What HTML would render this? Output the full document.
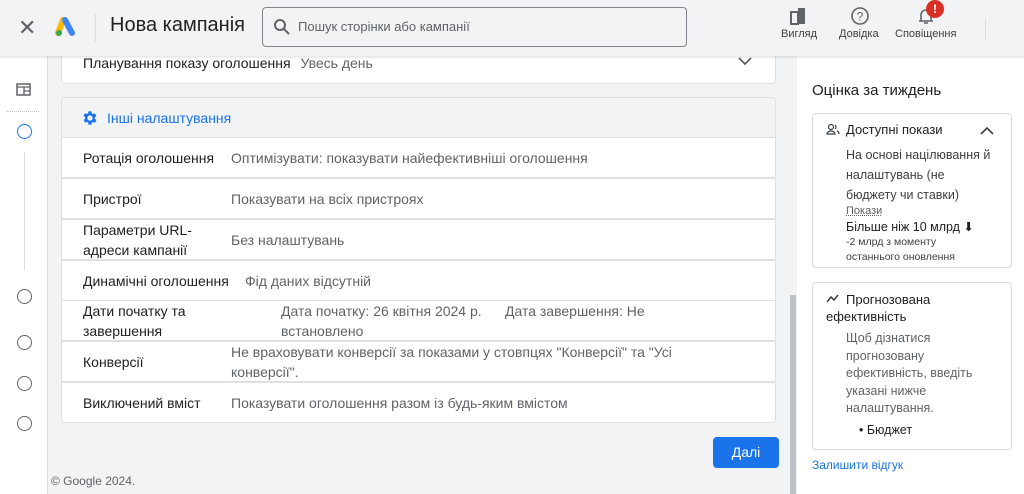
<!DOCTYPE html><html><head><meta charset="utf-8"><style>
*{box-sizing:border-box;margin:0;padding:0}
body{width:1024px;height:494px;overflow:hidden;background:#f1f3f4;font-family:"Liberation Sans","DejaVu Sans",sans-serif;color:#202124;position:relative}
.hdr{position:absolute;left:0;top:0;width:1024px;height:56px;background:#f1f3f4;box-shadow:0 1px 3px rgba(0,0,0,.15);z-index:2}
.abs{position:absolute}
.rail{left:0;top:56px;width:48px;height:438px;background:#fff;border-right:1px solid #e0e0e0}
.circ{position:absolute;left:17px;width:15px;height:15px;border:1.8px solid #5f6368;border-radius:50%}
.card{position:absolute;left:61px;width:715px;background:#fff;border:1px solid #e0e0e0}
.row{position:absolute;left:61px;width:715px;height:41px;background:#fff;border:1px solid #e0e0e0;font-size:14px}
.row .l{position:absolute;left:21px;color:#202124;line-height:20px}
.row .v{position:absolute;color:#5f6368;line-height:20px}
.right{left:797px;top:56px;width:227px;height:438px;background:#fff}
.rc{position:absolute;left:812px;width:200px;border:1px solid #dadce0;border-radius:4px;background:#fff;font-size:12.5px;color:#3c4043}
</style></head><body>
<div class="hdr">
 <div class="abs" style="left:18px;top:15px;font-size:22px;color:#5f6368">✕</div>
 <svg class="abs" style="left:55px;top:17px" width="22" height="20" viewBox="0 0 22 20"><path d="M8 3 L3 16" stroke="#fbbc04" stroke-width="6" stroke-linecap="round"/><path d="M10 3 L17 16" stroke="#4285f4" stroke-width="6" stroke-linecap="round"/><circle cx="4" cy="16" r="3" fill="#34a853"/></svg>
 <div class="abs" style="left:95px;top:14px;width:1px;height:28px;background:#dadce0"></div>
 <div class="abs" style="left:110px;top:14px;font-size:20px;color:#202124">Нова кампанія</div>
 <div class="abs" style="left:262px;top:7px;width:425px;height:40px;border:1px solid #80868b;border-radius:4px;background:#f1f3f4"></div>
 <svg class="abs" style="left:273px;top:18px" width="18" height="18" viewBox="0 0 18 18"><circle cx="7" cy="7" r="5" fill="none" stroke="#5f6368" stroke-width="2"/><path d="M11 11 L16 16" stroke="#5f6368" stroke-width="2"/></svg>
 <div class="abs" style="left:298px;top:19px;font-size:13px;color:#5f6368">Пошук сторінки або кампанії</div>
 <svg class="abs" style="left:789px;top:7px" width="18" height="18" viewBox="0 0 18 18"><rect x="2" y="5" width="7" height="12" fill="none" stroke="#5f6368" stroke-width="2"/><rect x="9" y="1" width="7" height="16" fill="#5f6368"/></svg>
 <div class="abs" style="left:781px;top:28px;font-size:11px;color:#3c4043">Вигляд</div>
 <svg class="abs" style="left:850px;top:6px" width="20" height="20" viewBox="0 0 20 20"><circle cx="10" cy="10" r="8" fill="none" stroke="#5f6368" stroke-width="1.6"/><text x="10" y="14.5" font-size="12" text-anchor="middle" fill="#5f6368" font-family="Liberation Sans">?</text></svg>
 <div class="abs" style="left:839px;top:28px;font-size:11px;color:#3c4043">Довідка</div>
 <svg class="abs" style="left:917px;top:7px" width="18" height="18" viewBox="0 0 18 18"><path d="M4 14 V8 a5 5 0 0 1 10 0 V14 Z M2 14 H16 M7 16 H11" fill="none" stroke="#5f6368" stroke-width="1.6"/></svg>
 <div class="abs" style="left:926px;top:0;width:18px;height:18px;border-radius:50%;background:#d93025;color:#fff;font-size:12px;font-weight:bold;text-align:center;line-height:18px">!</div>
 <div class="abs" style="left:895px;top:28px;font-size:11px;color:#3c4043">Сповіщення</div>
 <div class="abs" style="left:985px;top:18px;width:1px;height:22px;background:#e0e0e0"></div>
</div>
<div class="abs rail">
 <svg class="abs" style="left:16px;top:27px" width="15" height="13" viewBox="0 0 15 13"><rect x="1" y="1" width="13" height="11" fill="none" stroke="#5f6368" stroke-width="1.5"/><path d="M1 4 H14 M8 4 V12 M8 8 H14" stroke="#5f6368" stroke-width="1.3"/></svg>
 <div class="abs" style="left:7px;top:55px;width:32px;border-top:1px dotted #bdc1c6"></div>
</div>
<div class="circ" style="top:124px;border-color:#1a73e8"></div>
<div class="abs" style="left:24px;top:152px;width:1px;height:118px;background:#dadce0"></div>
<div class="circ" style="top:289px"></div>
<div class="circ" style="top:335px"></div>
<div class="circ" style="top:376px"></div>
<div class="circ" style="top:416px"></div>
<div class="card" style="top:40px;height:44px;border-top:none;border-radius:0 0 4px 4px">
 <div class="abs" style="left:21px;top:15px;font-size:14px">Планування показу оголошення <span style="color:#5f6368;margin-left:6px">Увесь день</span></div>
 <svg class="abs" style="left:676px;top:17px" width="14" height="9" viewBox="0 0 14 9"><path d="M1 1 L7 7 L13 1" fill="none" stroke="#5f6368" stroke-width="1.8"/></svg>
</div>
<div class="card" style="top:97px;height:41px;background:#f1f3f4;border-radius:4px 4px 0 0">
 <svg class="abs" style="left:19px;top:11px" width="18" height="18" viewBox="0 0 24 24"><path fill="#1a73e8" d="M19.4 13a7.5 7.5 0 0 0 0-2l2.1-1.6-2-3.5-2.5 1a7 7 0 0 0-1.7-1L15 3h-4l-.4 2.6a7 7 0 0 0-1.7 1l-2.5-1-2 3.5L6.6 11a7.5 7.5 0 0 0 0 2l-2.1 1.6 2 3.5 2.5-1a7 7 0 0 0 1.7 1L11 21h4l.4-2.6a7 7 0 0 0 1.7-1l2.5 1 2-3.5zM13 15.5a3.5 3.5 0 1 1 0-7 3.5 3.5 0 0 1 0 7z" transform="translate(-1 0)"/></svg>
 <div class="abs" style="left:45px;top:12px;font-size:14px;color:#1a73e8">Інші налаштування</div>
</div>
<div class="row" style="top:137px"><div class="l" style="top:10px">Ротація оголошення</div><div class="v" style="left:169px;top:10px">Оптимізувати: показувати найефективніші оголошення</div></div>
<div class="row" style="top:178px"><div class="l" style="top:10px">Пристрої</div><div class="v" style="left:169px;top:10px">Показувати на всіх пристроях</div></div>
<div class="row" style="top:219px"><div class="l" style="top:0px">Параметри URL-<br>адреси кампанії</div><div class="v" style="left:169px;top:10px">Без налаштувань</div></div>
<div class="row" style="top:260px"><div class="l" style="top:10px">Динамічні оголошення</div><div class="v" style="left:183px;top:10px">Фід даних відсутній</div></div>
<div class="row" style="top:300px"><div class="l" style="top:0px">Дати початку та<br>завершення</div><div class="v" style="left:219px;top:0px">Дата початку: 26 квітня 2024 р.&nbsp;&nbsp;&nbsp;&nbsp;&nbsp;&nbsp;Дата завершення: Не<br>встановлено</div></div>
<div class="row" style="top:341px"><div class="l" style="top:10px">Конверсії</div><div class="v" style="left:169px;top:0px">Не враховувати конверсії за показами у стовпцях "Конверсії" та "Усі<br>конверсії".</div></div>
<div class="row" style="top:382px;border-radius:0 0 4px 4px"><div class="l" style="top:10px">Виключений вміст</div><div class="v" style="left:169px;top:10px">Показувати оголошення разом із будь-яким вмістом</div></div>
<div class="abs" style="left:713px;top:437px;width:66px;height:31px;background:#1a73e8;border-radius:4px;color:#fff;font-size:14px;text-align:center;line-height:31px">Далі</div>
<div class="abs" style="left:51px;top:474px;font-size:12px;color:#5f6368">© Google 2024.</div>
<div class="abs" style="left:790px;top:56px;width:7px;height:438px;background:#f1f3f4"></div>
<div class="abs" style="left:790px;top:295px;width:6px;height:199px;background:#bdc1c6"></div>
<div class="abs right"></div>
<div class="abs" style="left:812px;top:82px;font-size:15px;color:#202124">Оцінка за тиждень</div>
<div class="rc" style="top:113px;height:155px">
 <svg class="abs" style="left:13px;top:9px" width="14" height="12" viewBox="0 0 14 12"><circle cx="5" cy="4" r="2.5" fill="none" stroke="#3c4043" stroke-width="1.2"/><path d="M1 11 a4 3 0 0 1 8 0 Z" fill="none" stroke="#3c4043" stroke-width="1.2"/><path d="M9 2 a2.5 2.5 0 0 1 0 4 M11 8 a3 3 0 0 1 2 3" fill="none" stroke="#3c4043" stroke-width="1.2"/></svg>
 <div class="abs" style="left:33px;top:8px;font-size:13px;color:#202124">Доступні покази</div>
 <svg class="abs" style="left:167px;top:12px" width="14" height="9" viewBox="0 0 14 9"><path d="M1 8 L7 2 L13 8" fill="none" stroke="#3c4043" stroke-width="1.6"/></svg>
 <div class="abs" style="left:33px;top:31px;line-height:20px;font-size:12.5px">На основі націлювання й<br>налаштувань (не<br>бюджету чи ставки)</div>
 <div class="abs" style="left:33px;top:91px;font-size:11px;color:#5f6368;text-decoration:underline dotted">Покази</div>
 <div class="abs" style="left:33px;top:105px;font-size:12.5px;color:#202124">Більше ніж 10 млрд ⬇</div>
 <div class="abs" style="left:33px;top:121px;font-size:10.5px;line-height:15px">-2 млрд з моменту<br>останнього оновлення</div>
</div>
<div class="rc" style="top:282px;height:168px">
 <svg class="abs" style="left:13px;top:11px" width="13" height="9" viewBox="0 0 13 9"><path d="M1 8 L5 3 L8 6 L12 1" fill="none" stroke="#3c4043" stroke-width="1.5"/></svg>
 <div class="abs" style="left:13px;top:8px;font-size:13px;color:#202124;line-height:17px;text-indent:20px;width:180px">Прогнозована ефективність</div>
 <div class="abs" style="left:33px;top:47px;line-height:17.5px;color:#5f6368">Щоб дізнатися<br>прогнозовану<br>ефективність, введіть<br>указані нижче<br>налаштування.</div>
 <div class="abs" style="left:46px;top:140px;color:#202124">• Бюджет</div>
</div>
<div class="abs" style="left:812px;top:458px;font-size:12px;color:#1a73e8">Залишити відгук</div>
</body></html>
